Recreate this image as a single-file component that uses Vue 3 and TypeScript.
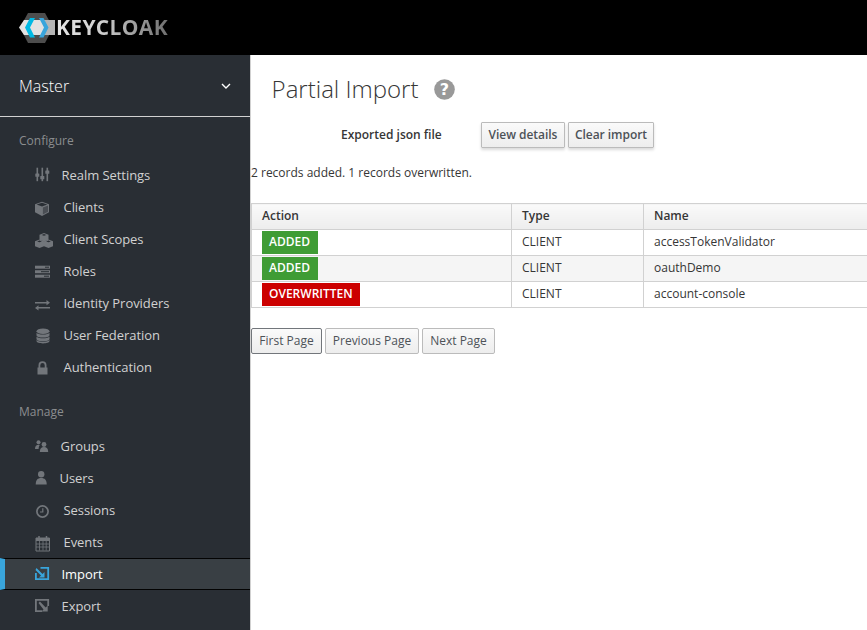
<template>
  <div class="page">
    <header class="topbar">
      <svg class="logo-mark" width="37" height="30" viewBox="0 0 37 30">
        <polygon points="9,0 26,0 34,14.500 26,30 9,30 1,14.500" fill="#4d4d4d" />
        <polygon points="5,7 36,7 36,22 5,22 0,14.500" fill="#e2e2e2" />
        <polygon points="26,7 36,7 36,22 26,22" fill="#b5b5b5" />
        <path d="M11 5 L6 14.500 L11 24.500 L16 24.500 L11 14.500 L16 5 Z" fill="#00b9e4" />
        <path d="M20 5 L25 14.500 L20 24.500 L24.500 24.500 L29.500 14.500 L24.500 5 Z" fill="#39a5dc" />
      </svg>
      <span class="logo-text">KEYCLOAK</span>
    </header>
    <div class="body">
      <aside class="sidebar">
        <div class="realm">
          <span>Master</span>
          <svg width="10" height="6" viewBox="0 0 10 6"><path d="M1 1l4 4 4-4" fill="none" stroke="#fff" stroke-width="1.4" /></svg>
        </div>
        <section v-for="group in groups" :key="group.title" class="group">
          <h2 class="group-title">{{ group.title }}</h2>
          <a v-for="item in group.items" :key="item.label" class="item" :class="{ active: item.label === 'Import' }">
            <span class="icon" :style="{ width: item.textLeft + 'px' }">
              <svg width="18" height="18" viewBox="0 0 18 18" v-html="icons[item.icon]"></svg>
            </span>
            <span>{{ item.label }}</span>
          </a>
        </section>
      </aside>
      <main class="content">
        <div class="title-row">
          <h1>Partial Import</h1>
          <svg class="help" width="21" height="21" viewBox="0 0 21 21">
            <circle cx="10.5" cy="10.5" r="10.3" fill="#999" />
            <text x="10.5" y="16" text-anchor="middle" class="help-mark">?</text>
          </svg>
        </div>
        <div class="file-row">
          <label>Exported json file</label>
          <button class="btn raised details">View details</button>
          <button class="btn raised clear">Clear import</button>
        </div>
        <p class="summary">2 records added. 1 records overwritten.</p>
        <table>
          <thead>
            <tr><th class="c1">Action</th><th class="c2">Type</th><th>Name</th></tr>
          </thead>
          <tbody>
            <tr v-for="row in rows" :key="row.name">
              <td class="action"><span class="tag" :class="row.action === 'ADDED' ? 'green' : 'red'">{{ row.action }}</span></td>
              <td>CLIENT</td>
              <td>{{ row.name }}</td>
            </tr>
          </tbody>
        </table>
        <div class="pager">
          <button class="btn focus first">First Page</button>
          <button class="btn prev">Previous Page</button>
          <button class="btn next">Next Page</button>
        </div>
      </main>
    </div>
  </div>
</template>

<script setup lang="ts">
interface NavItem {
  label: string
  icon: string
  textLeft: number
}

const groups: { title: string; items: NavItem[] }[] = [
  {
    title: 'Configure',
    items: [
      { label: 'Realm Settings', icon: 'sliders', textLeft: 26.5 },
      { label: 'Clients', icon: 'cube', textLeft: 28.5 },
      { label: 'Client Scopes', icon: 'cubes', textLeft: 28.5 },
      { label: 'Roles', icon: 'roles', textLeft: 28.5 },
      { label: 'Identity Providers', icon: 'exchange', textLeft: 28.5 },
      { label: 'User Federation', icon: 'database', textLeft: 28.5 },
      { label: 'Authentication', icon: 'lock', textLeft: 28.5 }
    ]
  },
  {
    title: 'Manage',
    items: [
      { label: 'Groups', icon: 'groups', textLeft: 25.5 },
      { label: 'Users', icon: 'user', textLeft: 24.5 },
      { label: 'Sessions', icon: 'clock', textLeft: 28.5 },
      { label: 'Events', icon: 'calendar', textLeft: 28.5 },
      { label: 'Import', icon: 'import', textLeft: 26.5 },
      { label: 'Export', icon: 'export', textLeft: 26.5 }
    ]
  }
]

const icons: Record<string, string> = {
  sliders:
    '<g fill="#72767b"><rect x="1.500" y="1.700" width="1.600" height="13.500"/><rect x="6.500" y="1.700" width="1.600" height="13.500"/><rect x="11.500" y="1.700" width="1.600" height="13.500"/><rect x="0.300" y="7.500" width="4" height="3.200" rx=".5"/><rect x="5.300" y="10" width="4" height="3.200" rx=".5"/><rect x="10.300" y="4.500" width="4" height="3.200" rx=".5"/></g>',
  cube:
    '<path d="M7 3.700 14 6.300v8L7 18 0 14.300v-8z" fill="#72767b"/><path d="M1.700 6.500 7 8.500l5.300-2L7 4.700z" fill="#292e34"/><path d="M7.900 9.500 13 7.600v6.100L7.900 16.500z" fill="#4a4e54"/>',
  cubes:
    '<g fill="#72767b"><path d="M9 3 13.500 4.700v5l-4.500 1.700-4.500-1.700v-5z"/><path d="M4.500 9.500l4.500 1.700v5L4.500 18 0 16.200v-5z"/><path d="M13.500 9.500l4.500 1.700v5L13.500 18 9 16.200v-5z"/></g><g fill="#292e34"><path d="M6.700 4.900 9 5.800l2.300-.9L9 4z"/><path d="M2.200 11.400l2.300 .9 2.300-.9-2.300-.9z"/><path d="M11.200 11.400l2.300 .9 2.300-.9-2.300-.9z"/></g>',
  roles:
    '<g fill="#72767b"><rect x="0" y="3.700" width="15" height="3"/><rect x="0" y="8.200" width="15" height="3"/><rect x="0" y="12.700" width="15" height="3"/></g><g fill="#292e34"><rect x="10" y="4.700" width="4" height="1"/><rect x="6" y="9.200" width="8" height="1"/><rect x="9" y="13.700" width="5" height="1"/></g>',
  exchange:
    '<g fill="#72767b"><path d="M0 8h11.500V6L15 8.750 11.500 11.200V9.500H0z"/><path d="M15 13H3.500V11.200L0 14l3.500 2.500v-2H15z"/></g>',
  database:
    '<g fill="#72767b"><ellipse cx="8" cy="5.300" rx="6.500" ry="2.800"/><path d="M1.500 6.800c1 2.400 12 2.400 13 0v2.400c0 3.200-13 3.200-13 0z"/><path d="M1.500 10.500c1 2.400 12 2.400 13 0v2.400c0 3.200-13 3.200-13 0z"/><path d="M1.500 14c1 2.400 12 2.400 13 0v1c0 3.200-13 3.200-13 0z"/></g>',
  lock:
    '<path d="M3.500 9.500V7.200a4 4 0 0 1 8 0v2.300h1v7H2.500v-7zm1.800 0h4.400V7.200a2.200 2.200 0 0 0-4.400 0z" fill="#72767b"/>',
  groups:
    '<g fill="#72767b"><circle cx="3.500" cy="5.200" r="2"/><circle cx="9" cy="7.500" r="2.400"/><path d="M0 12c0-3 1.500-4.200 3.500-4.200 .5 0 1 .1 1.300 .3C4 9 3.700 10.500 3.600 12z"/><path d="M4.800 15c0-3.500 1.500-5 4.200-5s4.200 1.500 4.200 5z"/></g>',
  user:
    '<g fill="#72767b"><circle cx="6.200" cy="5.200" r="3.200"/><path d="M.7 15.500c0-4.500 2-6.500 5.500-6.500s5.500 2 5.500 6.500z"/></g>',
  clock:
    '<circle cx="7.500" cy="10.500" r="5.600" fill="none" stroke="#72767b" stroke-width="1.700"/><path d="M7.800 7.300V11H5" fill="none" stroke="#72767b" stroke-width="1.200"/>',
  calendar:
    '<path d="M1 5h13.500v13H1z" fill="none" stroke="#72767b" stroke-width="1"/><path d="M1 5h13.500v3H1z" fill="#72767b"/><path d="M4 3v3M11.500 3v3" stroke="#72767b" stroke-width="1.500"/><path d="M1 11h13.500M1 14h13.500M4.500 7.500v10M8 7.500v10M11.200 7.500v10" stroke="#72767b" stroke-width=".8"/>',
  import:
    '<path d="M5.500 2.900h7.700V14.200H.9V8" fill="none" stroke="#39a5dc" stroke-width="1.800"/><path d="M1.500 3 7.500 9l2-2v5.500H4L6 10.500 0.500 5z" fill="#39a5dc"/>',
  export:
    '<path d="M7 14.200H.9V2.900h12.300V9" fill="none" stroke="#72767b" stroke-width="1.800"/><path d="M3.500 6 4.900 4.600 10.700 10.400l2-2v6.100H6.500l2-2z" fill="#72767b"/>'
}

const rows = [
  { action: 'ADDED', name: 'accessTokenValidator' },
  { action: 'ADDED', name: 'oauthDemo' },
  { action: 'OVERWRITTEN', name: 'account-console' }
]
</script>

<style scoped>
.page {
  width: 867px;
  height: 630px;
  overflow: hidden;
  display: flex;
  flex-direction: column;
  font-family: "Open Sans", sans-serif;
  font-size: 12px;
  color: #363636;
  background: #fff;
}
.topbar {
  height: 55px;
  flex: none;
  background: #000;
  display: flex;
  align-items: center;
  padding-left: 19px;
}
.logo-text {
  font-size: 21px;
  font-weight: 700;
  letter-spacing: 0.35px;
  line-height: 26px;
  margin-top: -1px;
  background: linear-gradient(90deg, #e6e6e6 0%, #cfcfcf 40%, #6f6f6f 100%);
  -webkit-background-clip: text;
  background-clip: text;
  color: transparent;
}
.body {
  flex: 1;
  display: flex;
  min-height: 0;
}
.sidebar {
  width: 250px;
  flex: none;
  background: #292e34;
  color: #d1d1d1;
  font-size: 13px;
  letter-spacing: -0.05px;
}
.realm {
  height: 61px;
  border-bottom: 1px solid #d1d1d1;
  padding: 0 19px;
  display: flex;
  align-items: center;
  justify-content: space-between;
  font-size: 16px;
  font-weight: 300;
  letter-spacing: 0;
  color: #fff;
}
.group-title {
  margin: 0;
  height: 27px;
  padding: 0 0 0 19px;
  font-size: 12px;
  font-weight: 400;
  line-height: 18px;
  letter-spacing: 0;
  color: #8b8d8f;
}
.group:nth-of-type(1) {
  padding-top: 15px;
}
.group:nth-of-type(2) {
  padding-top: 20px;
}
.item {
  height: 32px;
  display: flex;
  align-items: center;
  padding-left: 35px;
  box-sizing: border-box;
  color: #d1d1d1;
}
.item.active {
  background: #393f44;
  color: #fff;
  border-top: 1px solid #030303;
  border-bottom: 1px solid #030303;
  border-left: 5px solid #39a5dc;
  padding-left: 30px;
}
.icon {
  display: inline-flex;
  flex: none;
  align-items: center;
}
.icon svg {
  overflow: visible;
}
.content {
  flex: 1;
  min-width: 0;
  border-left: 1px solid #d1d1d1;
  overflow: hidden;
}
.title-row {
  height: 67px;
  padding-left: 20.6px;
  display: flex;
  align-items: center;
}
h1 {
  margin: 0;
  font-size: 24px;
  font-weight: 300;
  color: #363636;
}
.help {
  margin: 2px 0 0 15px;
}
.help-mark {
  fill: #fff;
  font-family: "DejaVu Sans", sans-serif;
  font-size: 16px;
  font-weight: 700;
}
.file-row {
  height: 26px;
  display: flex;
  align-items: center;
}
.file-row label {
  margin: 0 0 2px 90px;
  width: 140px;
  font-weight: 600;
}
.btn {
  height: 26px;
  padding: 0 0 2px;
  margin: 0 3px 0 0;
  font-family: inherit;
  font-size: 12px;
  color: #4d5258;
  background: linear-gradient(#fafafa, #ededed);
  border: 1px solid #bbb;
  border-radius: 1px;
}
.btn.raised {
  font-weight: 600;
  letter-spacing: -0.04px;
  box-shadow: 0 2px 3px rgba(3, 3, 3, 0.15);
}
.details {
  width: 84px;
}
.clear {
  width: 86px;
}
.summary {
  margin: 17px 0 0;
  line-height: 16px;
}
table {
  margin-top: 22px;
  width: calc(100% + 2px);
  table-layout: fixed;
  border-collapse: collapse;
}
.c1 {
  width: 260px;
}
.c2 {
  width: 132px;
}
th,
td {
  height: 26px;
  padding: 0 10px 2px;
  box-sizing: border-box;
  border: 1px solid #d1d1d1;
  text-align: left;
  white-space: nowrap;
}
th {
  font-weight: 600;
  background: linear-gradient(#fafafa, #ededed);
}
tbody tr:nth-child(even) {
  background: #f5f5f5;
}
td.action {
  padding: 0 10px;
}
.tag {
  display: inline-block;
  height: 23px;
  min-width: 56px;
  box-sizing: border-box;
  line-height: 21px;
  vertical-align: middle;
  padding: 0 7px;
  color: #fff;
  font-weight: 600;
}
.green {
  background: #3f9c35;
}
.red {
  background: #cc0000;
}
.pager {
  margin-top: 20px;
  display: flex;
}
.pager .btn {
  border-radius: 2px;
}
.first {
  width: 71px;
}
.prev {
  width: 94px;
}
.next {
  width: 73px;
}
.btn.focus {
  border-color: #72767b;
}
</style>

<style>
html,
body {
  margin: 0;
  overflow: hidden;
}
</style>
